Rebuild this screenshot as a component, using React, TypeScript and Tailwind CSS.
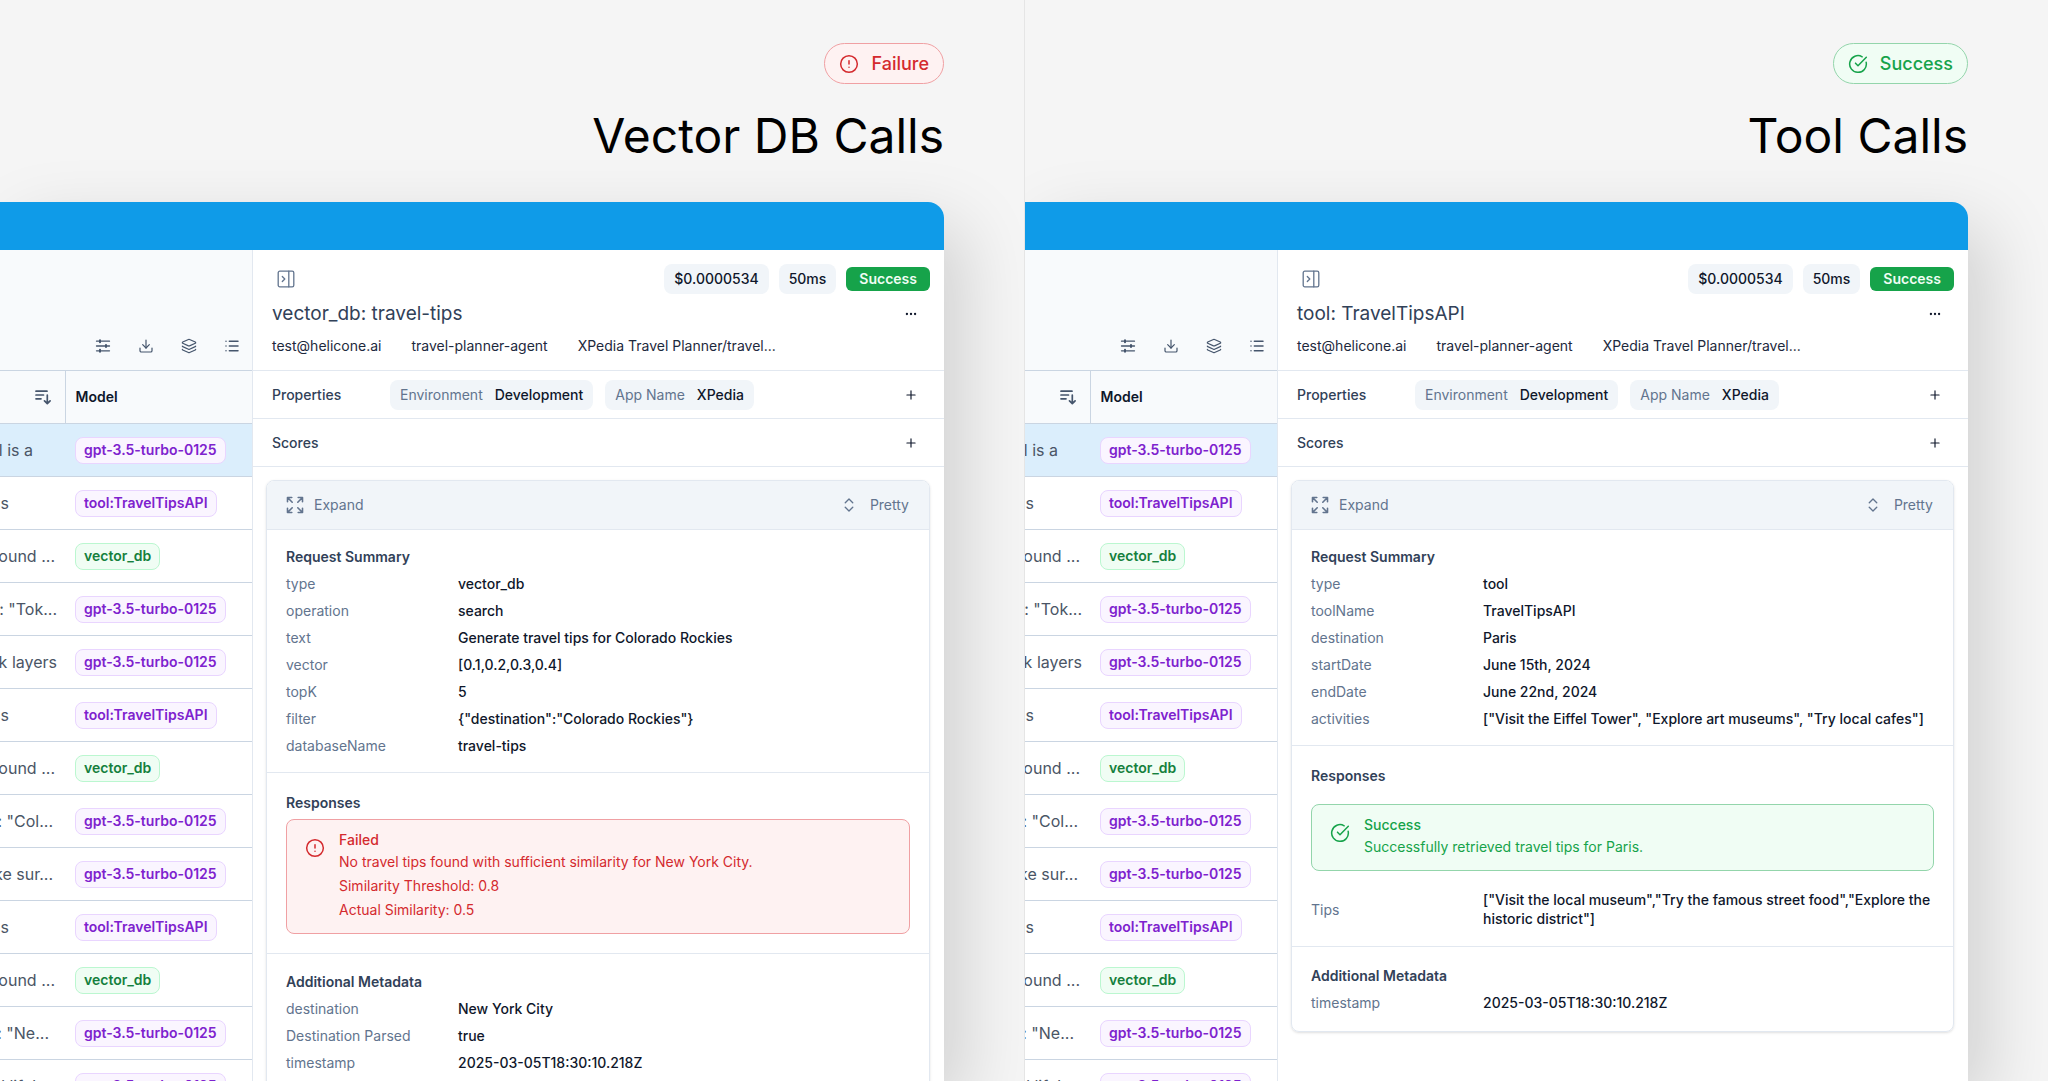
import React from "react";
import {
  AlertCircle,
  ChevronsUpDown,
  CircleCheckBig,
  Download,
  Ellipsis,
  Layers,
  List,
  Plus,
} from "lucide-react";

type Tone = "purple" | "green";
type Field = { label: string; value: string };

const rows: { text: string; pad: string; model: string; tone: Tone }[] = [
  { text: "l is a", pad: "pr-8", model: "gpt-3.5-turbo-0125", tone: "purple" },
  { text: "ess", pad: "pr-14", model: "tool:TravelTipsAPI", tone: "purple" },
  { text: "found ...", pad: "pr-2.5", model: "vector_db", tone: "green" },
  { text: ': "Tok...', pad: "pr-2", model: "gpt-3.5-turbo-0125", tone: "purple" },
  { text: "k layers", pad: "pr-2", model: "gpt-3.5-turbo-0125", tone: "purple" },
  { text: "ess", pad: "pr-14", model: "tool:TravelTipsAPI", tone: "purple" },
  { text: "found ...", pad: "pr-2.5", model: "vector_db", tone: "green" },
  { text: ': "Col...', pad: "pr-3", model: "gpt-3.5-turbo-0125", tone: "purple" },
  { text: "ake sur...", pad: "pr-3", model: "gpt-3.5-turbo-0125", tone: "purple" },
  { text: "ess", pad: "pr-14", model: "tool:TravelTipsAPI", tone: "purple" },
  { text: "found ...", pad: "pr-2.5", model: "vector_db", tone: "green" },
  { text: ': "Ne...', pad: "pr-4", model: "gpt-3.5-turbo-0125", tone: "purple" },
  { text: "d life's", pad: "pr-5", model: "gpt-3.5-turbo-0125", tone: "purple" },
];

function SlidersIcon() {
  return (
    <svg viewBox="0 0 16 16" className="size-4" fill="none" stroke="currentColor" strokeWidth="1.3" strokeLinecap="round" aria-hidden="true">
      <path d="M1.5 3.2h13M1.5 8h13M1.5 12.8h13" />
      <path d="M5 2.2v2M11 7v2M5 11.8v2" strokeWidth="2" />
    </svg>
  );
}

function SortIcon() {
  return (
    <svg viewBox="0 0 16 16" className="size-4" fill="none" stroke="currentColor" strokeWidth="1.7" strokeLinecap="round" strokeLinejoin="round" aria-hidden="true">
      <path d="M1 2.2h11M1 6h7.5M1 9.8h5M12.3 6v8.5M9.5 11.8l2.8 2.8 2.8-2.8" />
    </svg>
  );
}

function PanelIcon() {
  return (
    <svg viewBox="0 0 18 18" className="size-[18px]" fill="none" stroke="currentColor" strokeWidth="1.3" strokeLinecap="round" strokeLinejoin="round" aria-hidden="true">
      <rect x="1.2" y="1.2" width="15.6" height="15.6" rx="1.6" />
      <path d="M11.8 1.2v15.6M5.3 6.5L7.8 9l-2.5 2.5" />
    </svg>
  );
}

function ExpandIcon() {
  return (
    <svg viewBox="0 0 18 18" className="size-[18px]" fill="none" stroke="currentColor" strokeWidth="1.6" strokeLinecap="round" strokeLinejoin="round" aria-hidden="true">
      <path d="M1.5 5.8V1.5h4.3M1.8 1.8l4.4 4.4M12.2 1.5h4.3v4.3M16.2 1.8l-4.4 4.4M1.5 12.2v4.3h4.3M1.8 16.2l4.4-4.4M16.5 12.2v4.3h-4.3M16.2 16.2l-4.4-4.4" />
    </svg>
  );
}

function ModelTable() {
  return (
    <div className="flex w-[253px] shrink-0 flex-col border-r border-slate-200 bg-white">
      <div className="flex h-[120px] shrink-0 items-end justify-end gap-[23px] bg-slate-50 pr-2.5 pb-3.5 text-slate-600">
        <button type="button" aria-label="Filters" className="size-5 p-0.5"><SlidersIcon /></button>
        <button type="button" aria-label="Download" className="size-5 p-0.5"><Download className="size-4" strokeWidth={1.8} /></button>
        <button type="button" aria-label="Layers" className="size-5 p-0.5"><Layers className="size-4" strokeWidth={1.8} /></button>
        <button type="button" aria-label="List view" className="size-5 p-0.5"><List className="size-4" strokeWidth={2.2} /></button>
      </div>
      <table className="w-full table-fixed border-collapse border-t border-slate-300">
        <thead>
          <tr className="h-[53px] border-b border-slate-300 bg-slate-50">
            <th className="w-[65px] border-r border-slate-300 p-0 text-slate-600">
              <div className="flex justify-end pr-3.5"><SortIcon /></div>
            </th>
            <th className="p-0 pl-2.5 text-left text-sm font-semibold text-slate-900">Model</th>
          </tr>
        </thead>
        <tbody>
          {rows.map((row, i) => (
            <tr key={i} className={i === 0 ? "h-[53px] border-b border-slate-300 bg-[#dbeefc]" : "h-[53px] border-b border-slate-300 bg-white"}>
              <td className="p-0">
                <div className={`flex justify-end overflow-hidden text-base whitespace-nowrap text-gray-600 ${row.pad}`}>{row.text}</div>
              </td>
              <td className="p-0 pl-2.5">
                <span
                  className={
                    row.tone === "purple"
                      ? "inline-flex h-[27px] items-center rounded-lg border border-[#e9d5ff] bg-[#faf5ff] px-2 text-sm font-semibold whitespace-nowrap text-[#7e22ce]"
                      : "inline-flex h-[27px] items-center rounded-lg border border-[#bbf7d0] bg-[#f0fdf4] px-2 text-sm font-semibold whitespace-nowrap text-[#15803d]"
                  }
                >
                  {row.model}
                </span>
              </td>
            </tr>
          ))}
        </tbody>
      </table>
    </div>
  );
}

function Fields({ items }: { items: Field[] }) {
  return (
    <dl>
      {items.map((f) => (
        <div key={f.label} className="flex items-center py-1 leading-[19px]">
          <dt className="w-[172px] shrink-0 text-slate-500">{f.label}</dt>
          <dd className="font-medium text-slate-900">{f.value}</dd>
        </div>
      ))}
    </dl>
  );
}

function Heading({ children }: { children: React.ReactNode }) {
  return <h3 className="py-1 leading-[19px] font-semibold text-slate-700">{children}</h3>;
}

function Property({ name, value }: { name: string; value: string }) {
  return (
    <span className="flex h-[30px] items-center gap-3 rounded-lg bg-slate-100 px-2.5 font-medium">
      <span className="font-normal text-slate-500">{name}</span>
      <span className="text-slate-900">{value}</span>
    </span>
  );
}

function Drawer({ title, children }: { title: string; children: React.ReactNode }) {
  return (
    <div className="min-w-0 flex-1 bg-white text-sm text-slate-900">
      <div className="h-[121px] border-b border-slate-200 pt-3.5 pr-3.5 pl-[19px]">
        <div className="flex h-[30px] items-center gap-2.5">
          <button type="button" aria-label="Close panel" className="mr-auto ml-[5px] text-slate-500"><PanelIcon /></button>
          <span className="flex h-[30px] items-center rounded-lg bg-slate-100 px-2.5 font-medium">$0.0000534</span>
          <span className="flex h-[30px] items-center rounded-lg bg-slate-100 px-2.5 font-medium">50ms</span>
          <span className="flex h-6 items-center rounded-md bg-[#16a34a] px-[13px] font-semibold text-green-50">Success</span>
        </div>
        <div className="mt-1 flex h-8 items-center justify-between">
          <h2 className="text-[19px] text-slate-700">{title}</h2>
          <button type="button" aria-label="More" className="mr-3"><Ellipsis className="size-3.5" /></button>
        </div>
        <div className="mt-1.5 flex gap-[30px] leading-5 text-slate-800">
          <span>test@helicone.ai</span>
          <span>travel-planner-agent</span>
          <span>XPedia Travel Planner/travel...</span>
        </div>
      </div>
      <div className="flex h-12 items-center gap-3 border-b border-slate-200 pr-[26px] pl-[19px]">
        <span className="w-[106px] font-medium text-slate-700">Properties</span>
        <Property name="Environment" value="Development" />
        <Property name="App Name" value="XPedia" />
        <button type="button" aria-label="Add property" className="ml-auto"><Plus className="size-3.5" /></button>
      </div>
      <div className="flex h-12 items-center justify-between border-b border-slate-200 pr-[26px] pl-[19px]">
        <span className="font-medium text-slate-700">Scores</span>
        <button type="button" aria-label="Add score" className="ml-auto"><Plus className="size-3.5" /></button>
      </div>
      <div className="px-3.5 py-[13px] pl-[13px]">
        <div className="overflow-hidden rounded-lg border border-slate-200 shadow-sm">
          <div className="flex h-[49px] items-center justify-between border-b border-slate-200 bg-slate-100 px-5 pl-[19px] text-slate-500">
            <button type="button" className="flex items-center gap-2.5"><ExpandIcon />Expand</button>
            <button type="button" className="flex items-center gap-3"><ChevronsUpDown className="size-[18px]" strokeWidth={1.8} />Pretty</button>
          </div>
          {children}
        </div>
      </div>
    </div>
  );
}

function Half({ status, heading, title, divided, children }: {
  status: "failure" | "success";
  heading: string;
  title: string;
  divided?: boolean;
  children: React.ReactNode;
}) {
  return (
    <section className={divided ? "flex min-w-0 flex-col overflow-hidden border-l border-neutral-200" : "flex min-w-0 flex-col overflow-hidden"}>
      <header className="flex h-[202px] shrink-0 flex-col items-end pt-[43px] pr-20">
        {status === "failure" ? (
          <span className="flex h-[41px] items-center gap-3 rounded-full border border-[#f0a0a3] bg-[#fef2f2] px-3.5 text-lg font-medium text-[#d42a2e]">
            <AlertCircle className="size-5" strokeWidth={1.8} />Failure
          </span>
        ) : (
          <span className="flex h-[41px] items-center gap-3 rounded-full border border-[#93d5ab] bg-[#f0fdf4] px-3.5 text-lg font-medium text-[#16a34a]">
            <CircleCheckBig className="size-5" strokeWidth={1.8} />Success
          </span>
        )}
        <h1 className="mt-5 text-5xl leading-[64px] text-black">{heading}</h1>
      </header>
      <div className="mr-20 flex min-h-0 flex-1 flex-col rounded-tr-2xl bg-white shadow-[20px_24px_70px_rgba(0,0,0,0.15)]">
        <div className="h-12 shrink-0 rounded-tr-2xl bg-[#0f9be8]" />
        <div className="flex min-h-0 flex-1 overflow-hidden">
          <ModelTable />
          <Drawer title={title}>{children}</Drawer>
        </div>
      </div>
    </section>
  );
}

export default function App() {
  return (
    <main className="grid h-screen grid-cols-2 overflow-hidden bg-neutral-100 font-['Inter',sans-serif]">
      <Half status="failure" heading="Vector DB Calls" title="vector_db: travel-tips">
        <section className="border-b border-slate-200 px-[19px] py-[13px]">
          <Heading>Request Summary</Heading>
          <Fields
            items={[
              { label: "type", value: "vector_db" },
              { label: "operation", value: "search" },
              { label: "text", value: "Generate travel tips for Colorado Rockies" },
              { label: "vector", value: "[0.1,0.2,0.3,0.4]" },
              { label: "topK", value: "5" },
              { label: "filter", value: '{"destination":"Colorado Rockies"}' },
              { label: "databaseName", value: "travel-tips" },
            ]}
          />
        </section>
        <section className="border-b border-slate-200 px-[19px] pt-4 pb-[19px]">
          <Heading>Responses</Heading>
          <div className="mt-[3px] flex gap-3.5 rounded-lg border border-[#f0a0a3] bg-[#fef2f2] px-[18px] pt-2.5 pb-[11px] text-[#d42a2e]">
            <AlertCircle className="mt-2 size-5 shrink-0" strokeWidth={1.8} />
            <div>
              <p className="leading-5 font-medium">Failed</p>
              <p className="leading-6">No travel tips found with sufficient similarity for New York City.</p>
              <p className="leading-6">Similarity Threshold: 0.8</p>
              <p className="leading-6">Actual Similarity: 0.5</p>
            </div>
          </div>
        </section>
        <section className="px-[19px] py-3.5">
          <Heading>Additional Metadata</Heading>
          <Fields
            items={[
              { label: "destination", value: "New York City" },
              { label: "Destination Parsed", value: "true" },
              { label: "timestamp", value: "2025-03-05T18:30:10.218Z" },
            ]}
          />
        </section>
      </Half>
      <Half status="success" heading="Tool Calls" title="tool: TravelTipsAPI" divided>
        <section className="border-b border-slate-200 px-[19px] py-[13px]">
          <Heading>Request Summary</Heading>
          <Fields
            items={[
              { label: "type", value: "tool" },
              { label: "toolName", value: "TravelTipsAPI" },
              { label: "destination", value: "Paris" },
              { label: "startDate", value: "June 15th, 2024" },
              { label: "endDate", value: "June 22nd, 2024" },
              { label: "activities", value: '["Visit the Eiffel Tower", "Explore art museums", "Try local cafes"]' },
            ]}
          />
        </section>
        <section className="border-b border-slate-200 px-[19px] pt-4 pb-3.5">
          <Heading>Responses</Heading>
          <div className="mt-[15px] mb-[15px] flex gap-3.5 rounded-lg border border-[#93d5ab] bg-[#f0fdf4] px-[18px] pt-2.5 pb-[11px] text-[#16a34a]">
            <CircleCheckBig className="mt-2 size-5 shrink-0" strokeWidth={1.8} />
            <div>
              <p className="leading-5 font-medium">Success</p>
              <p className="leading-6">Successfully retrieved travel tips for Paris.</p>
            </div>
          </div>
          <Fields
            items={[
              { label: "Tips", value: '["Visit the local museum","Try the famous street food","Explore the historic district"]' },
            ]}
          />
        </section>
        <section className="px-[19px] py-[15px]">
          <Heading>Additional Metadata</Heading>
          <Fields items={[{ label: "timestamp", value: "2025-03-05T18:30:10.218Z" }]} />
        </section>
      </Half>
    </main>
  );
}
